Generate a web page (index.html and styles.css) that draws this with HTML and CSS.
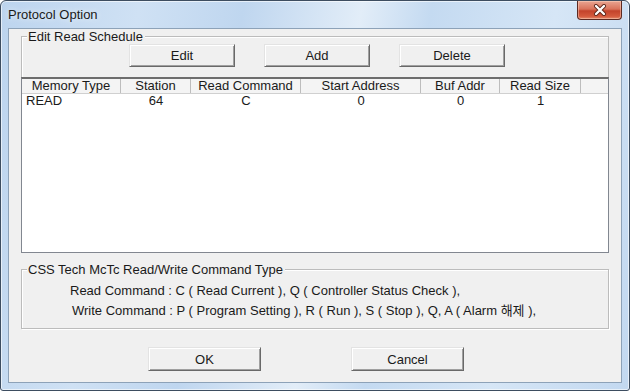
FILE: index.html
```html
<!DOCTYPE html>
<html lang="ko">
<head>
  <meta charset="UTF-8">
  <title>Protocol Option</title>
  <link rel="stylesheet" href="styles.css">
</head>
<body>

  <div class="window">
    <div class="titlebar">
      <span class="title">Protocol Option</span>
      <div class="close-btn">
        <svg width="16" height="12" viewBox="0 0 16 12">
          <path d="M4 2 L12 10 M12 2 L4 10" stroke="#5a2418" stroke-width="4" stroke-linecap="round"/>
          <path d="M4 2 L12 10 M12 2 L4 10" stroke="#fff" stroke-width="2.4" stroke-linecap="round"/>
        </svg>
      </div>
    </div>

    <div class="client">

      <!-- Edit Read Schedule -->
      <div class="group schedule">
        <span class="group-title">Edit Read Schedule</span>
        <div class="schedule-buttons">
          <button class="btn">Edit</button>
          <button class="btn">Add</button>
          <button class="btn">Delete</button>
        </div>
      </div>

      <div class="list">
        <div class="list-row list-head">
          <div class="cell">Memory Type</div>
          <div class="cell">Station</div>
          <div class="cell">Read Command</div>
          <div class="cell">Start Address</div>
          <div class="cell">Buf Addr</div>
          <div class="cell">Read Size</div>
          <div class="cell last"></div>
        </div>
        <div class="list-row">
          <div class="cell left">READ</div>
          <div class="cell">64</div>
          <div class="cell">C</div>
          <div class="cell">0</div>
          <div class="cell">0</div>
          <div class="cell">1</div>
          <div class="cell"></div>
        </div>
      </div>

      <!-- Command type help -->
      <div class="group commands">
        <span class="group-title">CSS Tech McTc Read/Write Command Type</span>
        <p class="cmd-line read">Read Command : C ( Read Current ), Q ( Controller Status Check ),</p>
        <p class="cmd-line write">Write Command : P ( Program Setting ), R ( Run ), S ( Stop ), Q, A ( Alarm 해제 ),</p>
      </div>

      <div class="dialog-buttons">
        <button class="btn wide">OK</button>
        <button class="btn wide">Cancel</button>
      </div>

    </div>
  </div>

</body>
</html>
```

FILE: styles.css
```css
* {
  margin: 0;
  padding: 0;
  box-sizing: border-box;
}

body {
  width: 630px;
  height: 391px;
  background: #fff;
  font-family: 'Liberation Sans', 'Noto Sans CJK KR', sans-serif;
  font-size: 13px;
  color: #000;
  overflow: hidden;
}

.window {
  width: 630px;
  height: 391px;
  border: 1px solid #3d4d60;
  border-radius: 6px 6px 3px 3px;
  padding: 0 7px 7px 7px;
  background: linear-gradient(100deg, #bcd4ee 0%, #cfe1f4 20%, #bfd6ef 35%, #e2edf8 52%, #c4daf1 62%, #d6e6f6 80%, #c2d8f0 100%);
  box-shadow: inset 0 0 0 1px rgba(255, 255, 255, 0.6);
  display: flex;
  flex-direction: column;
}

.titlebar {
  height: 27px;
  display: flex;
  justify-content: space-between;
  align-items: flex-start;
}

.title {
  margin-top: 6px;
  line-height: 15px;
  font-size: 13px;
  color: #1a1a1a;
  text-shadow: 0 0 6px rgba(255, 255, 255, 0.9);
}

.close-btn {
  width: 45px;
  height: 19px;
  border: 1px solid #5c2a22;
  border-top: none;
  border-radius: 0 0 4px 4px;
  background: linear-gradient(#e9a592 0%, #d9735b 45%, #c3432b 55%, #d45a3d 85%, #e48a6c 100%);
  box-shadow: inset 0 0 0 1px rgba(255, 220, 200, 0.45);
  display: flex;
  align-items: center;
  justify-content: center;
}

.client {
  flex: 1;
  border: 1px solid #8da2b8;
  background: #f0f0f0;
  padding: 7px 12px 0 12px;
}

.group {
  position: relative;
  border: 1px solid #bcbcbc;
  box-shadow: 1px 1px 0 #fff, inset 1px 1px 0 #fff;
}

.group-title {
  position: absolute;
  top: -8px;
  left: 5px;
  padding: 0 2px 0 1px;
  background: #f0f0f0;
  line-height: 15px;
  color: #1a1a1a;
}

.schedule {
  border-bottom: none;
  box-shadow: inset 1px 1px 0 #fff;
  padding: 7px 0 10px 107px;
}

.schedule-buttons {
  display: flex;
  gap: 29px;
}

.btn {
  width: 106px;
  height: 23px;
  font-family: 'Liberation Sans', sans-serif;
  font-size: 13px;
  color: #1a1a1a;
  background: #f0f0f0;
  border: 1px solid;
  border-color: #e3e3e3 #696969 #696969 #e3e3e3;
  box-shadow: inset 1px 1px 0 #fff, inset -1px -1px 0 #a0a0a0;
}

.btn.wide {
  width: 113px;
  height: 24px;
}

.list {
  height: 176px;
  background: #fff;
  border: 1px solid #828790;
  border-top: 2px solid #6d6d6d;
}

.list-row {
  display: grid;
  grid-template-columns: 99px 70px 110px 120px 79px 81px 1fr;
}

.list-head {
  height: 15px;
  background: #f4f4f4;
  border-bottom: 1px solid #d0d0d0;
}

.list-head .cell {
  border-right: 1px solid #bdbdbd;
}

.list-head .cell.last {
  border-right: none;
}

.cell {
  text-align: center;
  line-height: 14px;
  white-space: nowrap;
  color: #1a1a1a;
}

.cell.left {
  text-align: left;
  padding-left: 4px;
}

.commands {
  margin-top: 16px;
  height: 60px;
  padding-top: 11px;
}

.cmd-line {
  line-height: 20px;
  color: #1a1a1a;
}

.cmd-line.read {
  padding-left: 48px;
}

.cmd-line.write {
  padding-left: 50px;
}

.dialog-buttons {
  margin-top: 18px;
  padding-left: 127px;
  display: flex;
  gap: 90px;
}
```
